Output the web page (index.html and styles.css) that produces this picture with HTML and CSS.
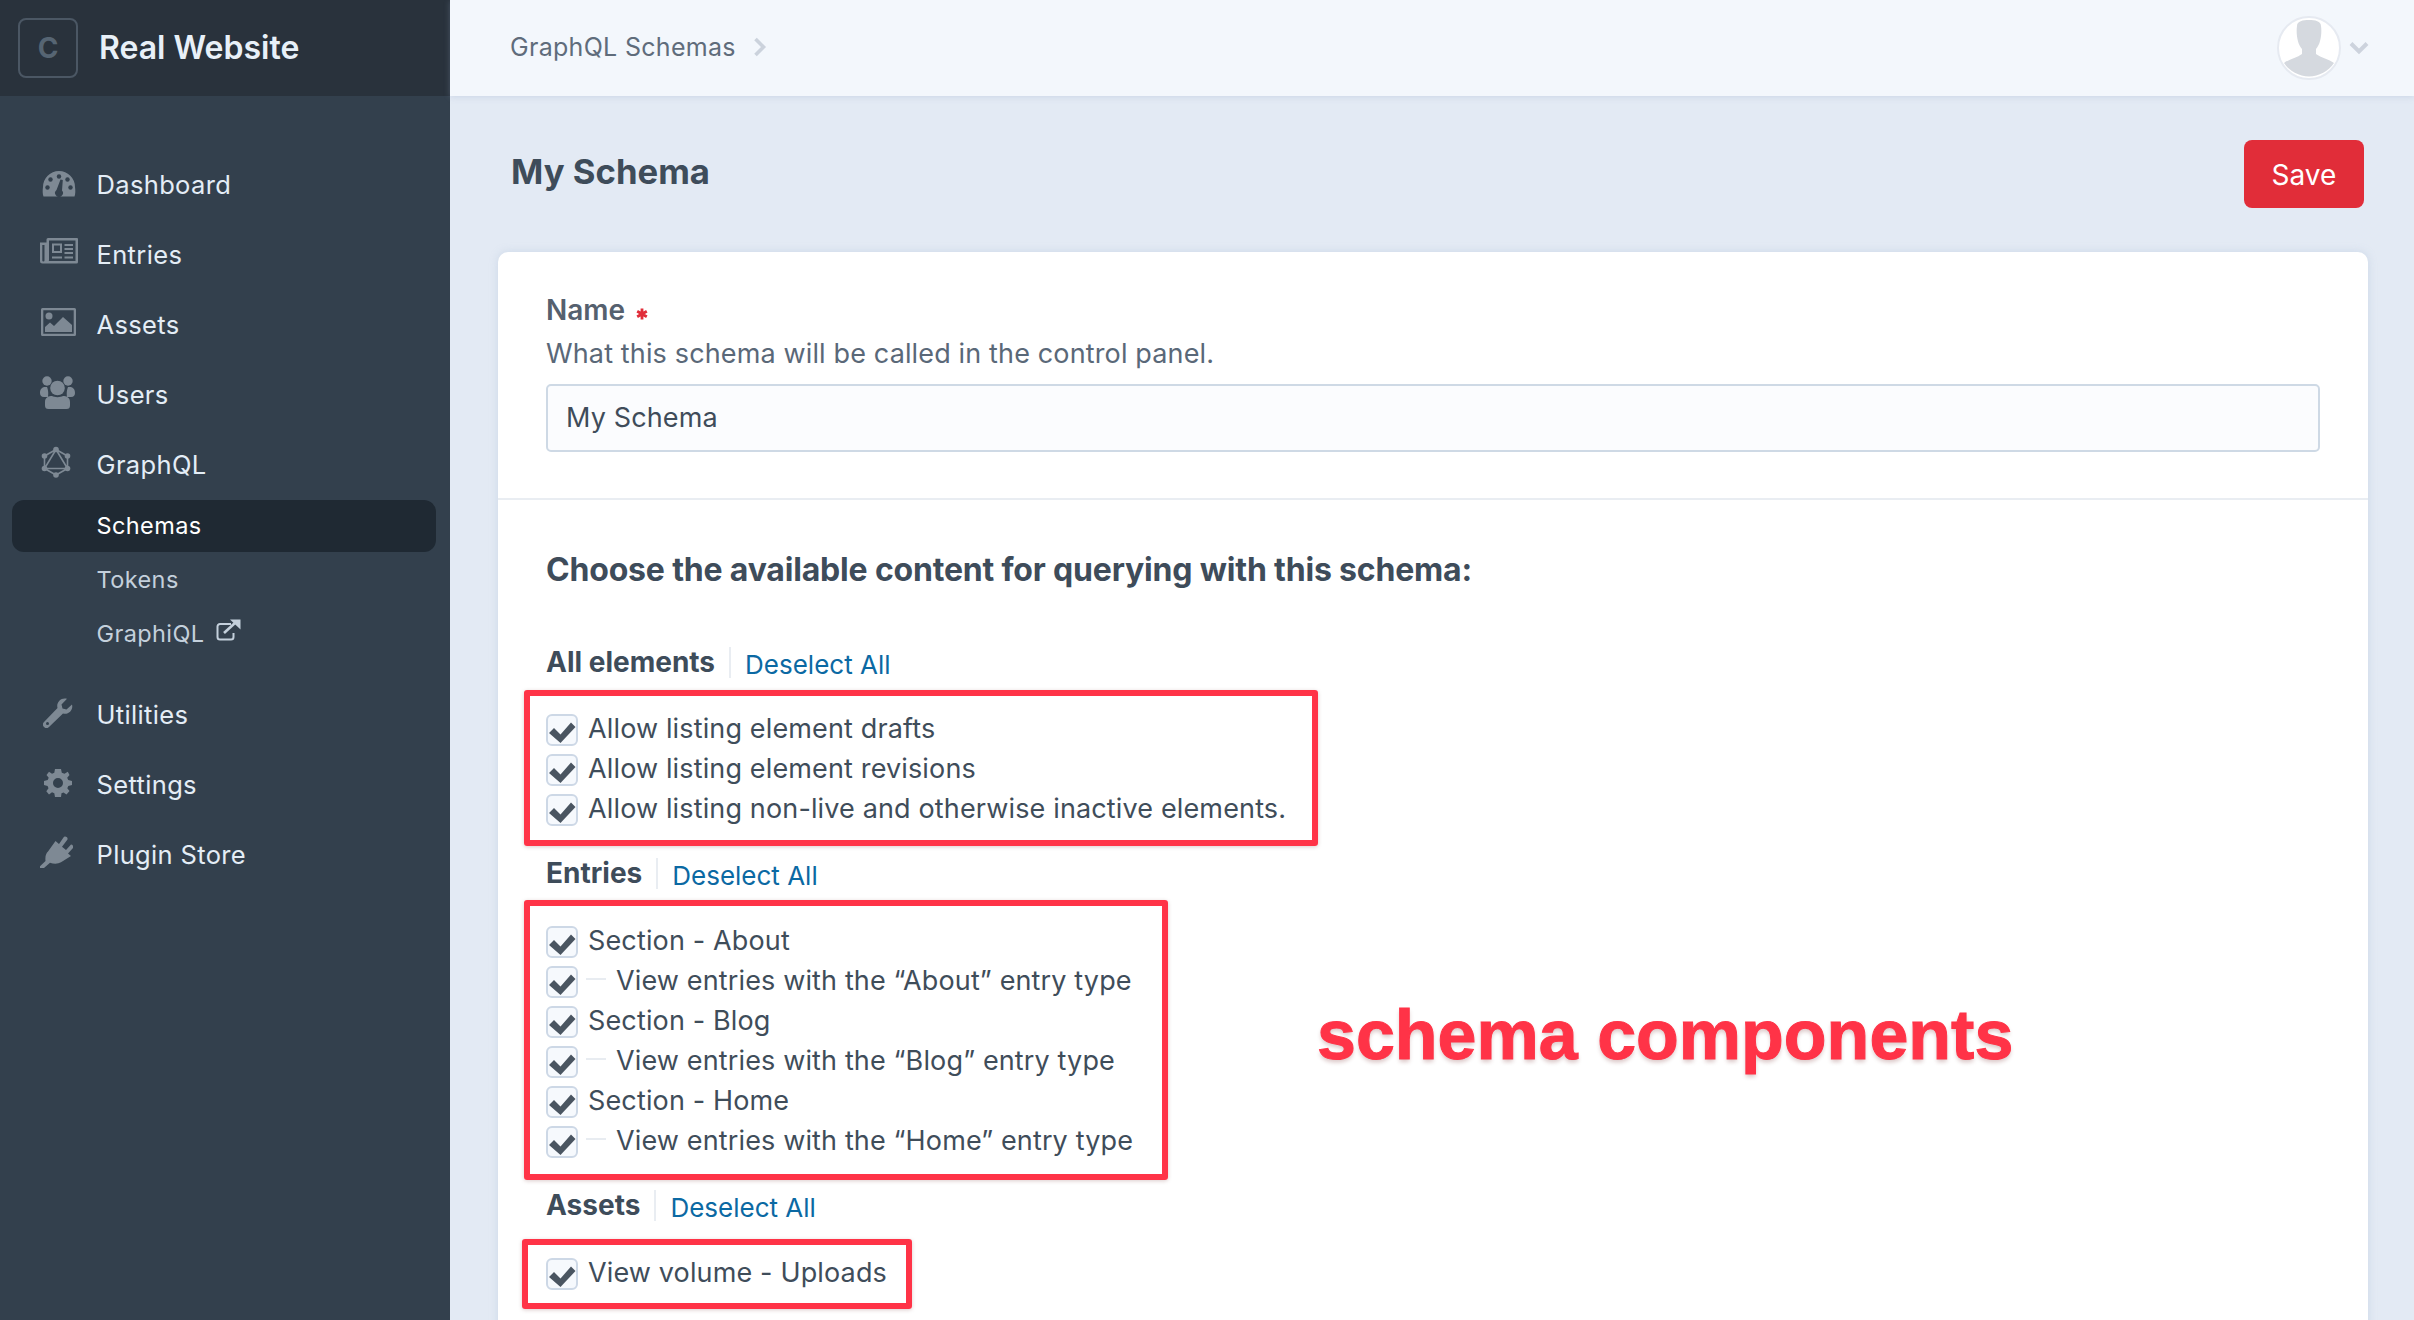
FILE: index.html
```html
<!DOCTYPE html>
<html lang="en">
<head>
<meta charset="utf-8">
<title>My Schema</title>
<link rel="stylesheet" href="styles.css">
</head>
<body>
<svg class="defs" width="0" height="0" aria-hidden="true">
  <symbol id="check" viewBox="0 0 32 32"><path d="M2 17 L7 12 L13.500 18.500 L24 6.500 L28.500 11 L13.500 27 Z"/></symbol>
</svg>
<div class="app">
  <aside class="sidebar">
    <div class="brand">
      <div class="logo">C</div>
      <div class="site-name">Real Website</div>
    </div>
    <nav class="nav">
      <a class="nav-item">
        <span class="ico i-dash"><svg viewBox="0 0 34 26" width="34" height="26"><path class="f" d="M1.500 25.500 C.5 23 .5 19 1 16 A16 16 0 0 1 33 16 C33.500 19 33.500 23 32.500 25.500 Z"/><g class="hole"><circle cx="17" cy="5.500" r="2.200"/><circle cx="8.500" cy="8.500" r="2.200"/><circle cx="25.500" cy="8.500" r="2.200"/><circle cx="5.500" cy="16.500" r="2.200"/><circle cx="28.500" cy="16.500" r="2.200"/><path d="M14.500 19 L18.500 8.500 L20.800 9 L20 19.500 A3.900 3.900 0 1 1 14.500 19 Z"/></g></svg></span>
        <span>Dashboard</span>
      </a>
      <a class="nav-item">
        <span class="ico i-entries"><svg viewBox="0 0 38 26" width="38" height="26"><path class="f" fill-rule="evenodd" d="M8 0 H37 A1 1 0 0 1 38 1 V24 A1.500 1.500 0 0 1 36.500 25.500 H2.500 A2.500 2.500 0 0 1 0 23 V4.500 H6.500 V1.500 A1.500 1.500 0 0 1 8 0 Z M9 2.500 V22 A1 1 0 0 1 8.500 23 H35.500 V2.500 Z M2.300 7 V22.500 A.9 .9 0 0 0 4.500 22.500 V7 Z"/><path class="f" fill-rule="evenodd" d="M12 5.500 H22 V15 H12 Z M14 7.500 V13 H20 V7.500 Z"/><path class="f" d="M24.500 6 H33 V8 H24.500 Z M24.500 10 H33 V12 H24.500 Z M24.500 14 H33 V16 H24.500 Z M12 18.500 H22 V20.500 H12 Z M24.500 18.500 H33 V20.500 H24.500 Z"/></svg></span>
        <span>Entries</span>
      </a>
      <a class="nav-item">
        <span class="ico i-assets"><svg viewBox="0 0 35 28" width="35" height="28"><path class="f" fill-rule="evenodd" d="M1.500 0 H33.500 A1.500 1.500 0 0 1 35 1.500 V26.500 A1.500 1.500 0 0 1 33.500 28 H1.500 A1.500 1.500 0 0 1 0 26.500 V1.500 A1.500 1.500 0 0 1 1.500 0 Z M2.300 2.300 V25.700 H32.700 V2.300 Z"/><circle class="f" cx="8" cy="8" r="3.500"/><path class="f" d="M4 24 V19 L9 14.500 L13 18 L22 9 L31 17 V24 Z"/></svg></span>
        <span>Assets</span>
      </a>
      <a class="nav-item">
        <span class="ico i-up"><svg viewBox="0 0 35 33" width="35" height="33"><circle class="f" cx="7" cy="5" r="4.700"/><circle class="f" cx="28" cy="5" r="4.700"/><path class="f" d="M0 17 C0 12 3 10.500 7 11 C9 16 8 20 8 21 H4 C1 21 0 19 0 17 Z M35 17 C35 12 32 10.500 28 11 C26 16 27 20 27 21 H31 C34 21 35 19 35 17 Z"/><circle class="f" cx="17.500" cy="12" r="7.300"/><path class="f" d="M5 26 C5 21 9 20 12 20 C14.500 21.500 20.500 21.500 23 20 C26 20 30 21 30 26 V29.500 A3.500 3.500 0 0 1 26.500 33 H8.500 A3.500 3.500 0 0 1 5 29.500 Z"/></svg></span>
        <span>Users</span>
      </a>
      <a class="nav-item">
        <span class="ico i-up i-gql"><svg viewBox="0 0 30 32" width="30" height="32"><path class="s" d="M15 3.500 L26.500 10 V22.500 L15 29 L3.500 22.500 V10 Z M15 3.500 L26.500 22.500 H3.500 Z"/><g class="f"><circle cx="15" cy="3.500" r="2.800"/><circle cx="26.500" cy="10" r="2.800"/><circle cx="26.500" cy="22.500" r="2.800"/><circle cx="15" cy="29" r="2.800"/><circle cx="3.500" cy="22.500" r="2.800"/><circle cx="3.500" cy="10" r="2.800"/></g></svg></span>
        <span>GraphQL</span>
      </a>
      <div class="subnav">
        <a class="sub-item active">Schemas</a>
        <a class="sub-item">Tokens</a>
        <a class="sub-item">GraphiQL
          <svg class="ext" viewBox="0 0 25 22" width="25" height="22"><path d="M15 5 H4 A2.500 2.500 0 0 0 1.500 7.500 V18 A2.500 2.500 0 0 0 4 20.500 H15 A2.500 2.500 0 0 0 17.500 18 V14" fill="none" stroke="currentColor" stroke-width="2"/><path d="M8 14 L19 4" fill="none" stroke="currentColor" stroke-width="2.600"/><path d="M14 0.500 H24.500 V10.500 Z" fill="currentColor"/></svg>
        </a>
      </div>
      <div class="nav-lower">
        <a class="nav-item">
          <span class="ico i-util"><svg viewBox="0 0 30 30" width="30" height="30"><path class="f" d="M29 6.500 C30.500 12 25.500 17 20 15.500 L6 29 A3.400 3.400 0 0 1 1 24 L14.500 10 C13 4.500 18 -1 24 0.800 L18.500 6.500 L19.500 10.500 L23.500 11.500 Z"/><circle class="hole" cx="4.500" cy="25.500" r="1.500"/></svg></span>
          <span>Utilities</span>
        </a>
        <a class="nav-item">
          <span class="ico i-set"><svg viewBox="0 0 28 28" width="28" height="28"><path class="f" fill-rule="evenodd" d="M11 0 H17 L17.800 3.700 L20.500 4.800 L23.800 2.800 L25.500 6 L23.200 8.800 L24.200 11 L28 12 V16 L24.300 17 L23.300 19.300 L25.500 22 L22.500 25.500 L19.500 23.400 L17.500 24.300 L17 28 H11 L10.300 24.300 L8 23.300 L5 25.500 L2.300 22.300 L4.500 19.300 L3.600 17 L0 16 V12 L3.700 11 L4.700 8.700 L2.500 6 L5 2.800 L8 4.800 L10.300 3.700 Z M14 9 A5 5 0 1 0 14 19 A5 5 0 1 0 14 9 Z"/></svg></span>
          <span>Settings</span>
        </a>
        <a class="nav-item">
          <span class="ico i-up"><svg viewBox="0 0 33 32" width="33" height="32"><path class="f" d="M0 30.300 L5.500 25 C5 20 6 17.500 8 15.500 L15.500 5 L19 8 L24 0.800 A2.400 2.400 0 0 1 27.500 3.500 L22 10.800 L26 14 L31 8.500 A2.400 2.400 0 0 1 33 12 L28 17.500 L31 20 L21 26.300 C18 28 14 28 10 26.800 L4 32 L0 32 Z"/></svg></span>
          <span>Plugin Store</span>
        </a>
      </div>
    </nav>
  </aside>

  <main class="main">
    <header class="topbar">
      <div class="crumb">GraphQL Schemas
        <svg class="crumb-arrow" viewBox="0 0 14 20" width="14" height="20"><path d="M2.500 2 L10.500 10 L2.500 18" fill="none" stroke="currentColor" stroke-width="3.600"/></svg>
      </div>
      <div class="account">
        <div class="avatar"><svg viewBox="0 0 60 60" width="60" height="60"><path d="M18 8 C18 3 24 2 30 2 C36 2 42 3 42 8 C43 14 42 26 37 31 V36 C42 40 50 41 55 45 A30 30 0 0 1 5 45 C10 41 18 40 23 36 V31 C18 26 17 14 18 8 Z"/></svg></div>
        <svg class="account-arrow" viewBox="0 0 20 14" width="20" height="14"><path d="M2 2.500 L10 10.500 L18 2.500" fill="none" stroke="currentColor" stroke-width="4"/></svg>
      </div>
    </header>

    <div class="page-head">
      <h1 class="page-title">My Schema</h1>
      <button class="save">Save</button>
    </div>

    <section class="card">
      <div class="field">
        <div class="field-label">Name <svg class="req" viewBox="0 0 12 12" width="12" height="12"><path d="M6 .5 V11.500 M1.200 3.200 L10.800 8.800 M10.800 3.200 L1.200 8.800" fill="none" stroke="currentColor" stroke-width="2.800"/></svg></div>
        <div class="field-desc">What this schema will be called in the control panel.</div>
        <div class="text-input">My Schema</div>
      </div>
      <div class="scopes">
        <h2 class="scopes-title">Choose the available content for querying with this schema:</h2>

        <div class="scope-head"><span class="scope-name">All elements</span><a class="deselect">Deselect All</a></div>
        <div class="mark mark-a">
          <label class="row"><span class="cb"><svg><use href="#check"/></svg></span><span class="lbl">Allow listing element drafts</span></label>
          <label class="row"><span class="cb"><svg><use href="#check"/></svg></span><span class="lbl">Allow listing element revisions</span></label>
          <label class="row"><span class="cb"><svg><use href="#check"/></svg></span><span class="lbl">Allow listing non-live and otherwise inactive elements.</span></label>
        </div>

        <div class="scope-head"><span class="scope-name">Entries</span><a class="deselect">Deselect All</a></div>
        <div class="mark mark-b">
          <label class="row"><span class="cb"><svg><use href="#check"/></svg></span><span class="lbl">Section - About</span></label>
          <label class="row"><span class="cb"><svg><use href="#check"/></svg></span><span class="dash"></span><span class="lbl">View entries with the “About” entry type</span></label>
          <label class="row"><span class="cb"><svg><use href="#check"/></svg></span><span class="lbl">Section - Blog</span></label>
          <label class="row"><span class="cb"><svg><use href="#check"/></svg></span><span class="dash"></span><span class="lbl">View entries with the “Blog” entry type</span></label>
          <label class="row"><span class="cb"><svg><use href="#check"/></svg></span><span class="lbl">Section - Home</span></label>
          <label class="row"><span class="cb"><svg><use href="#check"/></svg></span><span class="dash"></span><span class="lbl">View entries with the “Home” entry type</span></label>
        </div>

        <div class="scope-head"><span class="scope-name">Assets</span><a class="deselect">Deselect All</a></div>
        <div class="mark mark-c">
          <label class="row"><span class="cb"><svg><use href="#check"/></svg></span><span class="lbl">View volume - Uploads</span></label>
        </div>
      </div>
    </section>
    <div class="callout">schema components</div>
  </main>
</div>
</body>
</html>
```
FILE: styles.css
```css
* { box-sizing: border-box; }
html, body { margin: 0; height: 100%; overflow: hidden; }
body { font-family: Inter, "Liberation Sans", sans-serif; background: #e3eaf4; color: #3f4c5a; }
.defs { position: absolute; }
.app { display: grid; grid-template-columns: 450px 1fr; height: 1320px; overflow: hidden; }

/* sidebar */
.sidebar { background: #33404d; color: #e4edf6; }
.brand { height: 96px; background: #29323c; display: flex; align-items: center; padding-left: 18px; }
.logo { width: 60px; height: 60px; border: 2px solid #4b5764; border-radius: 8px; display: flex; align-items: center; justify-content: center; color: #566573; font-weight: 700; font-size: 28px; }
.site-name { margin: -2px 0 0 21px; font-size: 32px; font-weight: 600; color: #e8f0f8; }
.nav { padding-top: 53px; }
.nav-item { display: flex; align-items: center; height: 70px; padding-left: 40px; font-size: 25.5px; letter-spacing: .35px; }
.ico { width: 56.500px; flex: none; display: flex; align-items: center; }
.ico svg { display: block; }
.i-dash { margin: -1px 0 0 2px; width: 54.500px; }
.i-entries { margin-top: -7px; }
.i-assets { margin: -4px 0 0 1px; width: 55.500px; }
.i-up { margin-top: -4px; }
.i-gql { margin-left: 1px; width: 55.500px; }
.i-util { margin: -2px 0 0 3px; width: 53.500px; }
.i-set { margin: -2px 0 0 4px; width: 52.500px; }
.f { fill: #7e8994; }
.s { fill: none; stroke: #7e8994; stroke-width: 1.600; }
.hole { fill: #33404d; }
.subnav { padding: 0 14px 0 12px; }
.sub-item { display: flex; align-items: center; height: 54px; padding: 0 0 2px 84.500px; font-size: 23.5px; letter-spacing: .4px; color: #c4d0dc; gap: 11px; }
.sub-item.active { background: #1f2933; color: #fff; border-radius: 12px; height: 52px; margin: 1px 0; }
.ext { margin-top: -6px; }
.nav-lower { margin-top: 18px; }

/* main */
.main { position: relative; min-width: 0; }
.topbar { height: 96px; background: #f3f7fc; display: flex; align-items: center; justify-content: space-between; padding: 0 45px 0 60px; box-shadow: 0 1px 6px rgba(150, 170, 200, .3); }
.crumb { display: flex; align-items: center; gap: 17px; margin-top: -2px; font-size: 25px; letter-spacing: .3px; color: #5f6c7b; }
.crumb-arrow { color: #cbd2dc; }
.account { display: flex; align-items: center; gap: 8px; }
.avatar { width: 64px; height: 64px; border-radius: 50%; background: #fff; border: 2px solid #e6eaf1; overflow: hidden; }
.avatar svg { display: block; fill: #d5d9df; }
.account-arrow { color: #cdd3dd; }
.page-head { display: flex; align-items: center; justify-content: space-between; height: 68px; margin: 44px 50px 44px 61px; }
.page-title { margin: -7px 0 0; font-size: 34.7px; font-weight: 700; color: #3e4c5a; }
.save { width: 120px; height: 68px; padding: 2px 0 0; border: 0; border-radius: 8px; background: #e12d39; color: #fff; font: 400 28px Inter, "Liberation Sans", sans-serif; }

.card { margin: 0 46px 0 48px; background: #fff; border-radius: 10px 10px 0 0; box-shadow: 0 0 8px rgba(160, 180, 210, .35); height: 1100px; }
.field { padding: 40px 48px 48px; border-bottom: 2px solid #e9edf2; height: 248px; }
.field-label { font-size: 28px; font-weight: 600; line-height: 36px; color: #55606e; }
.req { color: #e12d39; margin-left: 4px; }
.field-desc { font-size: 27px; letter-spacing: .14px; line-height: 40px; margin-top: 6px; color: #5a6878; }
.text-input { margin-top: 10px; height: 68px; padding: 0 0 1px 18px; background: #fbfcfe; border: 2px solid #ced9e5; border-radius: 5px; display: flex; align-items: center; font-size: 27px; letter-spacing: .14px; color: #3f4c5a; }
.scopes { padding: 48px 48px 0; }
.scopes-title { margin: 0; font-size: 32px; letter-spacing: -.18px; line-height: 44px; font-weight: 700; color: #3e4c5a; }
.scope-head { display: flex; align-items: center; height: 31px; margin: 12px 0 11px; font-size: 28px; }
.scopes-title + .scope-head { margin: 55px 0 12px; }
.mark-b + .scope-head { margin: 10px 0 18px; }
.scope-name { font-weight: 700; color: #3e4c5a; padding-right: 14px; border-right: 2px solid #e9edf2; line-height: 31px; margin-top: -1px; }
.deselect { margin-left: 14px; color: #0b69a3; font-size: 26px; margin-top: 3px; }
.mark { margin-left: -22px; border: 6px solid #ff3347; border-radius: 3px; box-shadow: 0 1px 4px rgba(80, 0, 0, .2); }
.mark-a { padding: 14px 16px 10px; width: 794px; }
.mark-b { padding: 16px 16px 12px; width: 644px; }
.mark-c { padding: 9px 16px 9px; width: 390px; margin-left: -24px; }
.mark-c .row { margin-left: 2px; }
.row { display: flex; align-items: center; height: 40px; font-size: 27px; color: #3f4d5a; letter-spacing: .14px; }
.cb { width: 32px; height: 32px; flex: none; background: #f6f9fd; border: 2px solid #cdd8e6; border-radius: 6px; overflow: visible; }
.cb svg { display: block; width: 32px; height: 32px; margin: 0 0 0 -1px; fill: #4a5561; }
.lbl { margin: -3px 0 0 10px; white-space: nowrap; }
.dash { width: 20px; height: 2px; background: #e8ecf1; margin: -6px 0 0 8px; flex: none; }
.callout { position: absolute; left: 867px; top: 995px; font: 700 70px "Liberation Sans", sans-serif; -webkit-text-stroke: 1px #ff3347; color: #ff3347; text-shadow: 0 3px 4px rgba(90, 0, 0, .22); white-space: nowrap; }
```
